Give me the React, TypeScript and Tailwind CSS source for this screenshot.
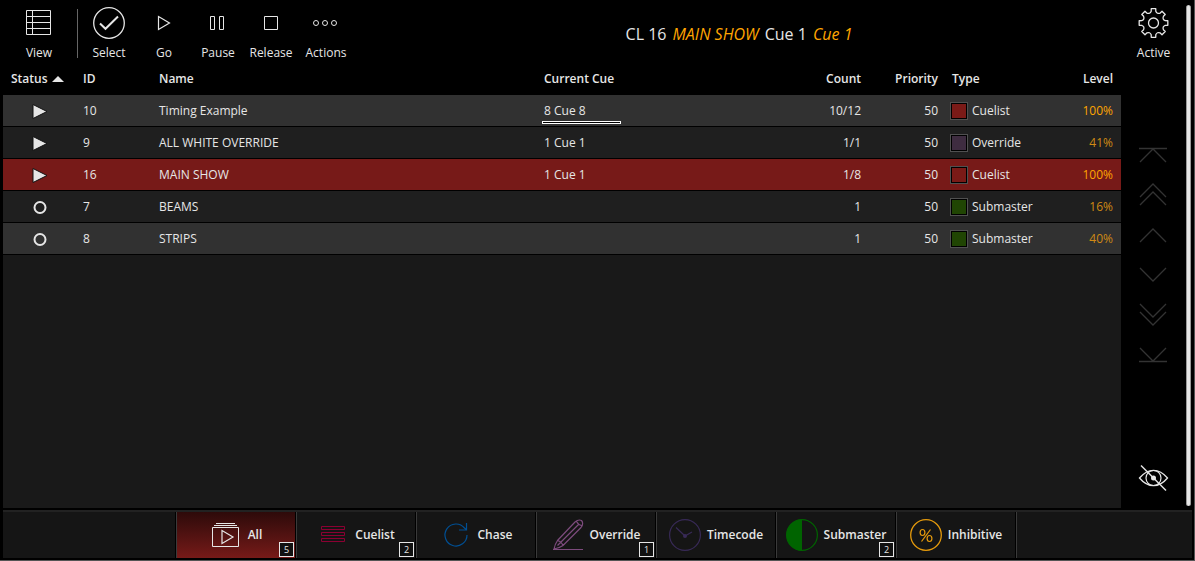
import React, { useState } from "react";

type IconProps = { children: React.ReactNode; size?: number };

function Icon({ children, size = 32 }: IconProps) {
  return (
    <svg
      width={size}
      height={size}
      viewBox={`0 0 ${size} ${size}`}
      fill="none"
      stroke="currentColor"
      strokeWidth="1"
      aria-hidden="true"
      className="block shrink-0"
    >
      {children}
    </svg>
  );
}

/* ---------- toolbar icons ---------- */

const ViewIcon = () => (
  <Icon>
    <path d="M3.5 3.5h24v24h-24zM3.5 9.5h24M3.5 15.5h24M3.5 21.5h24M9.5 3.5v24" />
  </Icon>
);
const SelectIcon = () => (
  <Icon>
    <circle cx="16" cy="16" r="15.3" strokeWidth="1.3" />
    <path d="M7 16.5l5.5 5.3L25 9.5" strokeWidth="2" />
  </Icon>
);
const GoIcon = () => (
  <Icon>
    <path d="M10.5 9.5v13L21.5 16z" strokeWidth="1.2" />
  </Icon>
);
const PauseIcon = () => (
  <Icon>
    <path d="M8.5 9.5h4v13h-4zM17.5 9.5h4v13h-4z" />
  </Icon>
);
const ReleaseIcon = () => (
  <Icon>
    <path d="M9.5 9.5h13v13h-13z" />
  </Icon>
);
const ActionsIcon = () => (
  <Icon>
    <circle cx="6" cy="16" r="2.5" />
    <circle cx="15" cy="16" r="2.5" />
    <circle cx="24" cy="16" r="2.5" />
  </Icon>
);

function gearPath(teeth: number): string {
  const at = (deg: number, r: number) => {
    const a = (deg * Math.PI) / 180;
    return `${(15.5 + r * Math.sin(a)).toFixed(2)} ${(16 - r * Math.cos(a)).toFixed(2)}`;
  };
  const step = 360 / teeth;
  let d = "";
  for (let i = 0; i < teeth; i++) {
    const a = i * step;
    d += `${i === 0 ? "M" : "L"}${at(a - 9, 14.5)}L${at(a + 9, 14.5)}L${at(a + 11, 12)}`;
    d += `Q${at(a + step / 2, 9.3)} ${at(a + step - 11, 12)}`;
  }
  return d + "Z";
}

const GearIcon = () => (
  <Icon>
    <path d={gearPath(8)} strokeWidth="1.3" strokeLinejoin="round" />
    <circle cx="15.5" cy="16" r="5" strokeWidth="1.3" />
  </Icon>
);

const HiddenIcon = () => (
  <Icon>
    <path d="M1.5 16Q8 8.3 15.5 8.3T29.5 16Q23 23.7 15.5 23.7T1.5 16z" strokeWidth="1.3" />
    <circle cx="15.5" cy="16" r="7.5" strokeWidth="1.2" />
    <circle cx="15.5" cy="16" r="2.5" fill="currentColor" stroke="none" />
    <path d="M3 3.5l25 25" strokeWidth="1.4" />
  </Icon>
);

/* ---------- bottom tab icons ---------- */

const AllIcon = () => (
  <Icon>
    <path d="M2.5 8.5h26v19h-26zM4 6.5h23M6 4.5h19" />
    <path d="M12 11.5v13L23 18z" strokeWidth="1.2" />
  </Icon>
);
const CuelistIcon = () => (
  <Icon>
    <path d="M4.5 7.5h23v3h-23zM4.5 13.5h23v3h-23zM4.5 19.5h23v3h-23z" />
  </Icon>
);
const ChaseIcon = () => (
  <Icon>
    <path d="M27 16A11 11 0 1 1 24.5 9L26.3 10.5M26.5 4v7h-7.5" strokeWidth="1.2" />
  </Icon>
);
const OverrideIcon = () => (
  <Icon>
    <path
      d="M1 30.5h30M2 30Q3 25 5.5 21.5L23 3Q26.5 0 29.5 1.5Q32 4.5 29 8.5L11 26.5Q7.5 29 2 30zM5.5 21.5Q9.5 22.5 11 26.5M24.5 2.5Q26.5 6 29.5 6.5M5.5 26.5L27 5"
      strokeWidth="1.2"
    />
  </Icon>
);
const TimecodeIcon = () => (
  <Icon>
    <circle cx="16" cy="16" r="15.4" strokeWidth="1.2" />
    <path d="M7 8.5l9 8.5 7-4" strokeWidth="1.2" />
    <circle cx="16" cy="17" r="2" fill="currentColor" stroke="none" />
  </Icon>
);
const SubmasterIcon = () => (
  <Icon>
    <circle cx="16" cy="16" r="15.4" strokeWidth="1.2" />
    <path d="M16 0.5a15.5 15.5 0 0 0 0 31z" fill="currentColor" stroke="none" />
  </Icon>
);
const InhibitiveIcon = () => (
  <Icon>
    <circle cx="16" cy="16" r="15.3" strokeWidth="1.3" />
    <ellipse cx="12.5" cy="13.5" rx="2.4" ry="3" strokeWidth="1.2" />
    <ellipse cx="19.5" cy="19.5" rx="2.4" ry="3" strokeWidth="1.2" />
    <path d="M20.5 10.5L11.5 22.5" strokeWidth="1.2" />
  </Icon>
);

/* ---------- data ---------- */

const tools = [
  { label: "Select", icon: <SelectIcon />, width: "w-[60px]" },
  { label: "Go", icon: <GoIcon />, width: "w-[50px]" },
  { label: "Pause", icon: <PauseIcon />, width: "w-[58px]" },
  { label: "Release", icon: <ReleaseIcon />, width: "w-[48px]" },
  { label: "Actions", icon: <ActionsIcon />, width: "w-[62px]" },
];

type Row = {
  id: number;
  name: string;
  cue: string;
  count: string;
  priority: number;
  type: string;
  swatch: string;
  level: number;
  levelColor: string;
  playing: boolean;
  progress?: boolean;
};

const rows: Row[] = [
  { id: 10, name: "Timing Example", cue: "8 Cue 8", count: "10/12", priority: 50, type: "Cuelist", swatch: "bg-[#7a1a17]", level: 100, levelColor: "text-[#ffa500]", playing: true, progress: true },
  { id: 9, name: "ALL WHITE OVERRIDE", cue: "1 Cue 1", count: "1/1", priority: 50, type: "Override", swatch: "bg-[#3e2c40]", level: 41, levelColor: "text-[#d08a14]", playing: true },
  { id: 16, name: "MAIN SHOW", cue: "1 Cue 1", count: "1/8", priority: 50, type: "Cuelist", swatch: "bg-[#7a1a17]", level: 100, levelColor: "text-[#ffa500]", playing: true },
  { id: 7, name: "BEAMS", cue: "", count: "1", priority: 50, type: "Submaster", swatch: "bg-[#204503]", level: 16, levelColor: "text-[#d08a14]", playing: false },
  { id: 8, name: "STRIPS", cue: "", count: "1", priority: 50, type: "Submaster", swatch: "bg-[#204503]", level: 40, levelColor: "text-[#d08a14]", playing: false },
];

const scrollSteps = [
  { label: "Scroll to top", d: "M1 9.5h28M2 23L15 10l13 13" },
  { label: "Page up", d: "M2 18L15 5l13 13M2 26L15 13l13 13" },
  { label: "Line up", d: "M2 23L15 10l13 13" },
  { label: "Line down", d: "M2 9l13 13L28 9" },
  { label: "Page down", d: "M2 5l13 13L28 5M2 13l13 13L28 13" },
  { label: "Scroll to bottom", d: "M1 22.5h28M2 9l13 13L28 9" },
];

const tabs = [
  { label: "All", icon: <AllIcon />, color: "text-[#e6e6e6]", badge: 5 },
  { label: "Cuelist", icon: <CuelistIcon />, color: "text-[#8c0032]", badge: 2 },
  { label: "Chase", icon: <ChaseIcon />, color: "text-[#004f93]" },
  { label: "Override", icon: <OverrideIcon />, color: "text-[#7d4b7d]", badge: 1 },
  { label: "Timecode", icon: <TimecodeIcon />, color: "text-[#382a57]" },
  { label: "Submaster", icon: <SubmasterIcon />, color: "text-[#006400]", badge: 2 },
  { label: "Inhibitive", icon: <InhibitiveIcon />, color: "text-[#e59a0c]" },
];

/* ---------- parts ---------- */

function ToolButton({ label, icon, width }: { label: string; icon: React.ReactNode; width: string }) {
  return (
    <button type="button" className={`flex shrink-0 flex-col items-center gap-1 pt-[7px] ${width}`}>
      {icon}
      <span className="leading-5">{label}</span>
    </button>
  );
}

function StatusIcon({ playing }: { playing: boolean }) {
  return (
    <svg width="18" height="18" viewBox="0 0 18 18" role="img" aria-label={playing ? "Playing" : "Stopped"} className="mx-auto block">
      {playing ? (
        <path d="M3 2.5v14L17 9.5z" fill="#e6e6e6" stroke="#111" strokeWidth="1" />
      ) : (
        <circle cx="10" cy="9.5" r="5.5" fill="none" stroke="#e6e6e6" strokeWidth="2" />
      )}
    </svg>
  );
}

function PlaybackTable({ selected, onSelect }: { selected: number; onSelect: (id: number) => void }) {
  return (
    <table className="w-full table-fixed border-collapse text-left">
      <colgroup>
        <col className="w-[72px]" />
        <col className="w-[76px]" />
        <col />
        <col className="w-[257px]" />
        <col className="w-[76px]" />
        <col className="w-[77px]" />
        <col className="w-[100px]" />
        <col className="w-[75px]" />
      </colgroup>
      <thead className="[&_th]:font-semibold">
        <tr className="h-8 bg-black">
          <th scope="col" aria-sort="ascending" className="pl-2">
            <span className="flex items-center gap-1">
              Status
              <svg width="12" height="6" viewBox="0 0 12 6" aria-hidden="true" className="shrink-0">
                <path d="M0 6L6 0l6 6z" fill="#e6e6e6" />
              </svg>
            </span>
          </th>
          <th scope="col" className="px-2">ID</th>
          <th scope="col" className="px-2">Name</th>
          <th scope="col" className="px-2">Current Cue</th>
          <th scope="col" className="px-2 text-right">Count</th>
          <th scope="col" className="px-2 text-right">Priority</th>
          <th scope="col" className="px-1.5">Type</th>
          <th scope="col" className="px-2 text-right">Level</th>
        </tr>
      </thead>
      <tbody>
        {rows.map((row, i) => (
          <tr
            key={row.id}
            aria-selected={row.id === selected}
            onClick={() => onSelect(row.id)}
            className={`h-8 shadow-[inset_0_-1px_0_#000] ${
              row.id === selected ? "bg-[#771a18]" : i % 4 === 0 ? "bg-[#313131]" : "bg-[#1f1f1f]"
            }`}
          >
            <td><StatusIcon playing={row.playing} /></td>
            <td className="px-2">{row.id}</td>
            <td className="truncate px-2">{row.name}</td>
            <td className="relative px-2">
              {row.cue}
              {row.progress && (
                <span className="absolute bottom-[3px] left-1.5 h-[3px] w-[79px] border border-white bg-black" />
              )}
            </td>
            <td className="px-2 text-right">{row.count}</td>
            <td className="px-2 text-right">{row.priority}</td>
            <td className="px-1">
              <span className="flex items-center gap-1">
                <span className="shrink-0 border border-[#505050]">
                  <span className={`block h-4 w-4 border border-black ${row.swatch}`} />
                </span>
                {row.type}
              </span>
            </td>
            <td className={`px-2 text-right ${row.levelColor}`}>{row.level}%</td>
          </tr>
        ))}
      </tbody>
    </table>
  );
}

export default function App() {
  const [selected, setSelected] = useState(16);
  const [tab, setTab] = useState("All");

  return (
    <div className="flex h-screen flex-col border-r border-b border-[#555] bg-black pl-[3px] font-['Open_Sans','Noto_Sans',sans-serif] text-[12px] leading-4 text-[#e6e6e6]">
      <div className="flex min-h-0 flex-1 pr-[3px]">
        <main className="flex min-w-0 flex-1 flex-col bg-[#191919]">
          <header className="flex h-[63px] shrink-0 bg-black">
            <ToolButton label="View" icon={<ViewIcon />} width="w-[72px]" />
            <div className="mr-px ml-0.5 mt-[9px] h-[49px] w-px shrink-0 bg-[#666]" />
            {tools.map((t) => (
              <ToolButton key={t.label} {...t} />
            ))}
            <h1 className="flex min-w-0 flex-1 items-center justify-center gap-1.5 pt-1 text-[16px] whitespace-nowrap">
              <span>CL 16</span>
              <em className="text-[#ffa500]">MAIN SHOW</em>
              <span>Cue 1</span>
              <em className="text-[#ffa500]">Cue 1</em>
            </h1>
          </header>
          <PlaybackTable selected={selected} onSelect={setSelected} />
        </main>

        <aside className="flex w-[65px] shrink-0 flex-col items-center">
          <ToolButton label="Active" icon={<GearIcon />} width="w-full" />
          <div className="mt-[72px] flex flex-col">
            {scrollSteps.map((s) => (
              <button key={s.label} type="button" aria-label={s.label} className="flex h-10 w-10 items-center justify-center text-[#333]">
                <Icon><path d={s.d} strokeWidth="1.3" /></Icon>
              </button>
            ))}
          </div>
          <button type="button" aria-label="Toggle visibility" className="mt-auto mb-2.5 flex h-10 w-10 items-center justify-center">
            <HiddenIcon />
          </button>
        </aside>

        <div className="mt-[5px] mb-[2px] w-[5px] shrink-0 rounded-full border-x border-[#999] bg-[#e6e6e6]" />
      </div>

      <nav aria-label="Playback filter" className="mt-0.5 mr-0.5 mb-0.5 flex h-12 shrink-0 border-t-2 border-[#222] bg-[#151515]">
        <div className="w-[173px] shrink-0 border-r border-black" />
        {tabs.map((t) => (
          <button
            key={t.label}
            type="button"
            aria-pressed={tab === t.label}
            onClick={() => setTab(t.label)}
            className={`relative flex w-[120px] shrink-0 items-center justify-center gap-1.5 border-r border-l border-r-black border-l-[#3a3a3a] font-semibold ${
              tab === t.label ? "bg-linear-to-b from-[#2e0a0a] to-[#771a18]" : ""
            }`}
          >
            <span className={t.color}>{t.icon}</span>
            <span>{t.label}</span>
            {t.badge !== undefined && (
              <span className="absolute right-px bottom-px flex h-[15px] w-[15px] items-center justify-center border border-[#e6e6e6] bg-[#111] text-[9px] leading-none font-normal">
                {t.badge}
              </span>
            )}
          </button>
        ))}
        <div className="flex-1 border-l border-[#3a3a3a]" />
      </nav>
    </div>
  );
}
